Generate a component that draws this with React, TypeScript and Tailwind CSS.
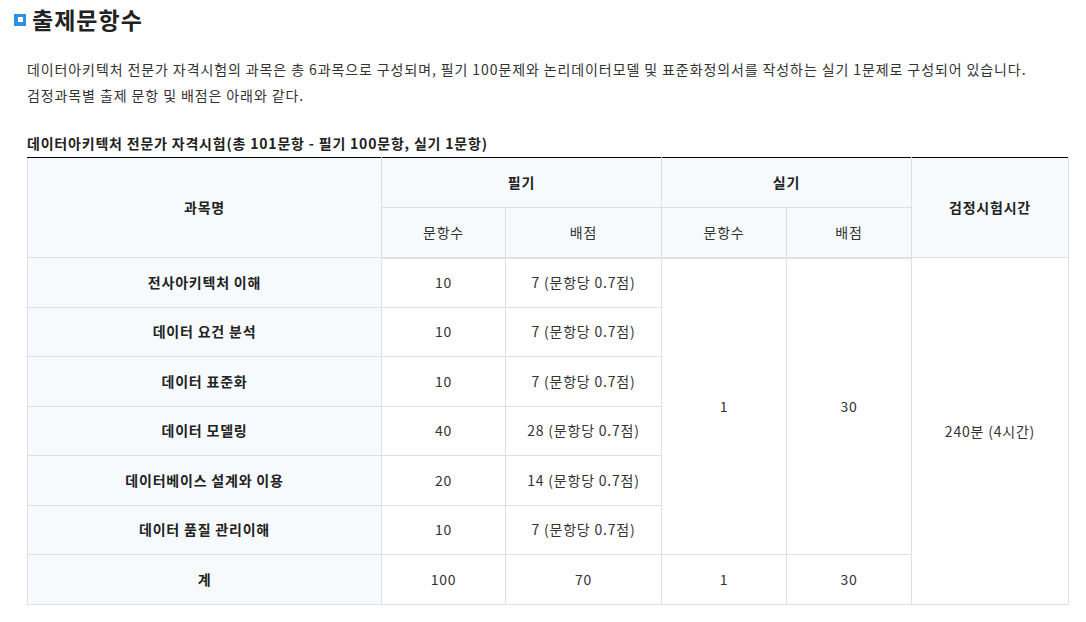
import React from "react";

const rows = [
  { name: "전사아키텍처 이해", q: "10", s: "7 (문항당 0.7점)" },
  { name: "데이터 요건 분석", q: "10", s: "7 (문항당 0.7점)" },
  { name: "데이터 표준화", q: "10", s: "7 (문항당 0.7점)" },
  { name: "데이터 모델링", q: "40", s: "28 (문항당 0.7점)" },
  { name: "데이터베이스 설계와 이용", q: "20", s: "14 (문항당 0.7점)" },
  { name: "데이터 품질 관리이해", q: "10", s: "7 (문항당 0.7점)" },
];

export default function App() {
  const th = "border border-[#dde1e6] bg-[#f7fafd] font-bold text-[#222] text-center align-middle";
  const td = "border border-[#dde1e6] bg-white text-[#333] text-center align-middle";
  return (
    <div
      className="w-[1086px] h-[622px] bg-white text-[#333] overflow-hidden"
      style={{ fontFamily: '"Noto Sans CJK KR", "Noto Sans", sans-serif' }}
    >
      <div className="flex items-center pl-[14px] pt-[3px] h-[36px]">
        <span className="w-[12px] h-[12px] bg-[#2f8fe0] flex items-center justify-center mr-[6px]">
          <span className="w-[5px] h-[5px] bg-white block" />
        </span>
        <h1 className="text-[23px] font-bold text-[#222] leading-none tracking-[1px]">출제문항수</h1>
      </div>
      <div className="pl-[27px] pt-[20px] text-[14px] leading-[26px] text-[#333] tracking-[0.9px] whitespace-nowrap">
        <p>데이터아키텍처 전문가 자격시험의 과목은 총 6과목으로 구성되며, 필기 100문제와 논리데이터모델 및 표준화정의서를 작성하는 실기 1문제로 구성되어 있습니다.</p>
        <p>검정과목별 출제 문항 및 배점은 아래와 같다.</p>
      </div>
      <div className="pl-[27px] pr-[18px] pt-[25px]">
        <div className="text-[14px] font-bold text-[#222] leading-[20px] tracking-[0.8px] pb-[4px]">
          데이터아키텍처 전문가 자격시험(총 101문항 - 필기 100문항, 실기 1문항)
        </div>
        <table className="w-[1041px] border-collapse table-fixed border-t-[1.5px] border-t-black text-[14px] tracking-[0.8px]">
          <colgroup>
            <col className="w-[354px]" />
            <col className="w-[124px]" />
            <col className="w-[156px]" />
            <col className="w-[125px]" />
            <col className="w-[125px]" />
            <col className="w-[157px]" />
          </colgroup>
          <thead>
            <tr className="h-[50px]">
              <th rowSpan={2} className={th + " border-t-black"}>과목명</th>
              <th colSpan={2} className={th + " border-t-black"}>필기</th>
              <th colSpan={2} className={th + " border-t-black"}>실기</th>
              <th rowSpan={2} className={th + " border-t-black"}>검정시험시간</th>
            </tr>
            <tr className="h-[50px]">
              <th className={th + " font-normal text-[#333] border-b-2"}>문항수</th>
              <th className={th + " font-normal text-[#333] border-b-2"}>배점</th>
              <th className={th + " font-normal text-[#333] border-b-2"}>문항수</th>
              <th className={th + " font-normal text-[#333] border-b-2"}>배점</th>
            </tr>
          </thead>
          <tbody>
            {rows.map((r, i) => (
              <tr key={i} className="h-[49.5px]">
                <th className={th}>{r.name}</th>
                <td className={td}>{r.q}</td>
                <td className={td}>{r.s}</td>
                {i === 0 && (
                  <>
                    <td rowSpan={6} className={td}>1</td>
                    <td rowSpan={6} className={td}>30</td>
                    <td rowSpan={7} className={td}>240분 (4시간)</td>
                  </>
                )}
              </tr>
            ))}
            <tr className="h-[50px]">
              <th className={th}>계</th>
              <td className={td}>100</td>
              <td className={td}>70</td>
              <td className={td}>1</td>
              <td className={td}>30</td>
            </tr>
          </tbody>
        </table>
      </div>
    </div>
  );
}
